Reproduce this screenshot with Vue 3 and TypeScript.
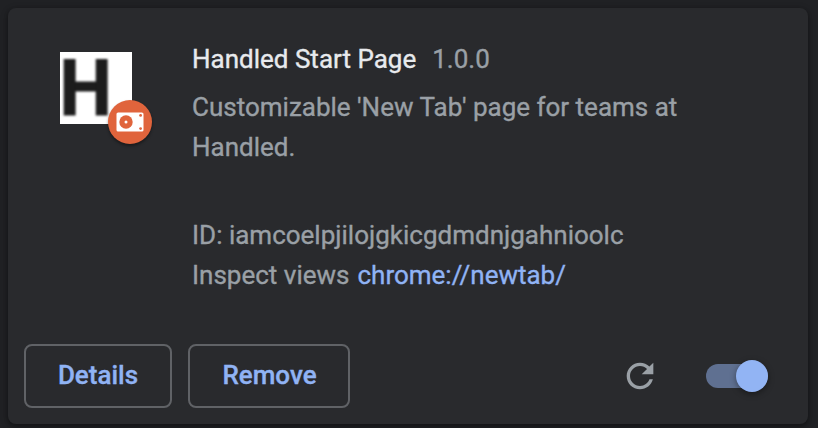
<script setup lang="ts">
import { ref } from 'vue'

interface Extension {
  name: string
  version: string
  description: string
  id: string
  view: string
}

const extension: Extension = {
  name: 'Handled Start Page',
  version: '1.0.0',
  description: "Customizable 'New Tab' page for teams at Handled.",
  id: 'iamcoelpjilojgkicgdmdnjgahnioolc',
  view: 'chrome://newtab/',
}

const enabled = ref(true)
</script>

<template>
  <main class="page">
    <article class="card">
      <section class="main">
        <div class="icon-wrapper">
          <svg class="logo" viewBox="0 0 72 72">
            <rect width="72" height="72" fill="#fff" />
            <text class="logo-letter" transform="translate(-0.4 63.4) scale(0.95 1)">H</text>
          </svg>
          <div class="source">
            <svg width="28" height="20" viewBox="0 0 28 20">
              <rect x="0.5" y="0.5" width="27" height="19" rx="1.6" fill="#fff" />
              <circle cx="10" cy="10" r="6.7" fill="#e0643c" />
              <circle cx="10" cy="10" r="1.5" fill="#fff" />
              <circle cx="24.6" cy="3.4" r="1.4" fill="#e0643c" />
              <circle cx="24.6" cy="16.6" r="1.4" fill="#e0643c" />
            </svg>
          </div>
        </div>
        <div class="content">
          <header class="heading">
            <span class="name">{{ extension.name }}</span>
            <span class="version">{{ extension.version }}</span>
          </header>
          <p class="description">{{ extension.description }}</p>
          <div class="meta">ID: {{ extension.id }}</div>
          <div class="meta views">
            <span>Inspect views</span>
            <a class="link">{{ extension.view }}</a>
          </div>
        </div>
      </section>
      <footer class="actions">
        <button class="button details">Details</button>
        <button class="button remove">Remove</button>
        <span class="spacer"></span>
        <svg class="reload" viewBox="0 0 24 24">
          <path
            d="M17.65 6.35C16.2 4.9 14.21 4 12 4c-4.42 0-7.99 3.58-7.99 8s3.57 8 7.99 8c3.73 0 6.84-2.55 7.73-6h-2.08c-.82 2.33-3.04 4-5.65 4-3.31 0-6-2.69-6-6s2.69-6 6-6c1.66 0 3.14.69 4.22 1.78L13 11h7V4l-2.35 2.35z"
          />
        </svg>
        <button
          class="toggle"
          :class="{ on: enabled }"
          role="switch"
          :aria-checked="enabled"
          @click="enabled = !enabled"
        >
          <span class="knob"></span>
        </button>
      </footer>
    </article>
  </main>
</template>

<style>
body {
  background: #202124;
}
</style>

<style scoped>
.page {
  box-sizing: border-box;
  width: 818px;
  height: 428px;
  padding: 8px 10px 4px 8px;
  overflow: hidden;
  background: #202124;
  font-family: Roboto, 'Liberation Sans', sans-serif;
  font-size: 26px;
  line-height: 40px;
  color: #9aa0a6;
  -webkit-text-stroke: 0.35px currentColor;
}
.card {
  display: flex;
  flex-direction: column;
  box-sizing: border-box;
  height: 416px;
  border-radius: 8px;
  background: #292a2d;
  box-shadow: 0 2px 4px rgba(0, 0, 0, 0.3), 0 2px 6px 2px rgba(0, 0, 0, 0.15);
}
.main {
  display: flex;
  flex: 1;
  padding: 31px 40px 0 52px;
}
.icon-wrapper {
  position: relative;
  width: 72px;
  height: 72px;
  margin: 13px 60px 0 0;
}
.logo {
  display: block;
  width: 72px;
  height: 72px;
  overflow: visible;
}
.logo-letter {
  font-size: 78px;
  font-weight: 700;
  fill: #1c1c1c;
  stroke: #1c1c1c;
  stroke-width: 1.2px;
  -webkit-text-stroke: 0;
  filter: blur(0.9px);
}
.source {
  position: absolute;
  left: 48px;
  top: 48px;
  display: flex;
  align-items: center;
  justify-content: center;
  width: 44px;
  height: 44px;
  border-radius: 50%;
  background: #e0643c;
  box-shadow: 0 2px 3px rgba(0, 0, 0, 0.4);
}
.content {
  width: 520px;
}
.heading {
  display: flex;
  gap: 16px;
  height: 48px;
}
.name {
  color: #e8eaed;
}
.description {
  height: 80px;
  margin: 0 0 48px;
}
.views {
  display: flex;
  gap: 8px;
}
.link {
  color: #90b3f4;
}
.actions {
  display: flex;
  align-items: center;
  padding: 0 40px 16px 16px;
}
.button {
  box-sizing: border-box;
  height: 64px;
  padding: 0 0 2px;
  border: 2px solid #606266;
  border-radius: 8px;
  background: transparent;
  font: 500 26px Roboto, 'Liberation Sans', sans-serif;
  color: #90b3f4;
  -webkit-text-stroke: 0.35px currentColor;
}
.details {
  width: 148px;
  margin-right: 16px;
}
.remove {
  width: 162px;
  padding-left: 1px;
}
.spacer {
  flex: 1;
}
.reload {
  width: 40px;
  height: 40px;
  margin-right: 46px;
  fill: #9aa0a6;
}
.toggle {
  display: flex;
  align-items: center;
  width: 62px;
  height: 24px;
  padding: 0;
  border: 0;
  border-radius: 12px;
  background: #5f6368;
}
.toggle.on {
  justify-content: flex-end;
  background: #5f7091;
}
.knob {
  flex: none;
  width: 32px;
  height: 32px;
  border-radius: 50%;
  background: #92b4f4;
  box-shadow: 0 2px 6px rgba(0, 0, 0, 0.4);
}
</style>
